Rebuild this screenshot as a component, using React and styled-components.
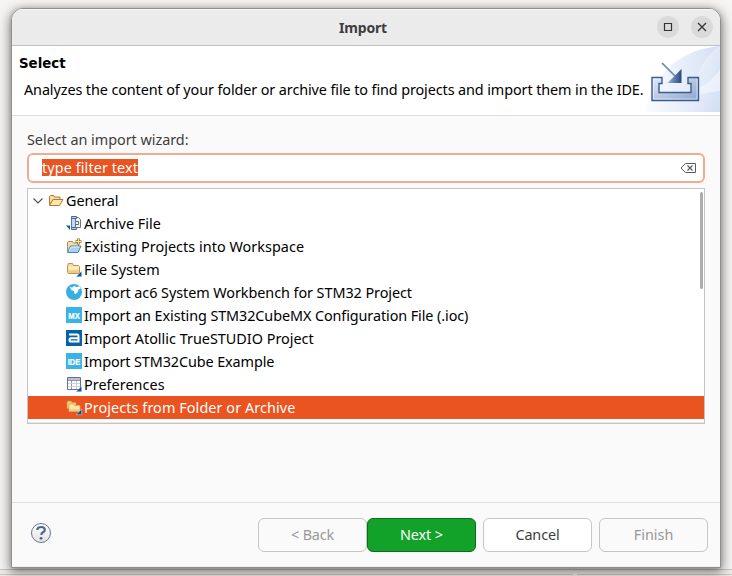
import React from "react";
import styled, { createGlobalStyle, css } from "styled-components";

const Global = createGlobalStyle`
  * { box-sizing: border-box; }
  body {
    margin: 0;
    font-family: "Noto Sans", "Open Sans", sans-serif;
    font-size: 14.4px;
    color: #000;
  }
`;

const Desktop = styled.div`
  width: 732px;
  height: 576px;
  padding: 8px 11px;
  overflow: hidden;
  background:
    linear-gradient(#c9c6c3, #c9c6c3) 0 569px / 732px 1px no-repeat,
    linear-gradient(#c9c6c3, #c9c6c3) 0 574px / 573px 1px no-repeat,
    linear-gradient(#c9c6c3, #c9c6c3) 577px 574px / 155px 1px no-repeat,
    linear-gradient(#eeebe9, #eeebe9) 0 570px / 732px 6px no-repeat,
    #f6f5f3;
`;

const Window = styled.main`
  width: 710px;
  height: 560px;
  display: flex;
  flex-direction: column;
  border: 1px solid #8f8f8e;
  border-radius: 12px 12px 0 0;
  overflow: hidden;
  background: #fafafa;
  box-shadow: 0 3px 12px 1px rgba(0, 0, 0, 0.5), 0 0 4px rgba(0, 0, 0, 0.1);
`;

const TitleBar = styled.header`
  height: 37px;
  flex: none;
  display: grid;
  grid-template-columns: 1fr auto 1fr;
  align-items: center;
  background: #ebebeb;
  border-bottom: 1px solid #bfbfbf;
  box-shadow: inset 0 1px #f9f9f9;
`;

const Title = styled.h1`
  grid-column: 2;
  margin: 0;
  padding: 2px 6px 0 0;
  font-size: 14px;
  line-height: 20px;
  font-weight: 700;
  color: #3d3d3d;
`;

const WindowControls = styled.div`
  display: flex;
  justify-content: flex-end;
  gap: 12px;
  padding-right: 7px;
`;

const ControlButton = styled.button`
  width: 22px;
  height: 22px;
  padding: 0;
  border: 0;
  border-radius: 50%;
  background: #dadada;
  svg { display: block; }
`;

const Banner = styled.section`
  height: 70px;
  flex: none;
  display: flex;
  justify-content: space-between;
  background: #fff;
  border-bottom: 1px solid #dedede;
  > svg { flex: none; }
`;

const BannerText = styled.div`
  padding: 8px 0 0 7px;
  min-width: 0;
  white-space: nowrap;
`;

const BannerTitle = styled.h2`
  margin: 0;
  font-family: "DejaVu Sans", sans-serif;
  font-size: 13.33px;
  line-height: 20px;
  font-weight: 700;
`;

const Text = styled.span`
  white-space: pre;
  letter-spacing: ${(p) => p.$track || 0}px;
`;

const BannerMessage = styled.p`
  margin: 6px 0 0 5px;
  line-height: 20px;
`;

const Body = styled.section`
  flex: 1;
  display: flex;
  flex-direction: column;
  padding: 14px 15px 0;
`;

const FieldLabel = styled.label`
  height: 20px;
  margin-bottom: 3px;
  line-height: 20px;
  color: #3d3d3d;
`;

const SearchBox = styled.div`
  height: 30px;
  flex: none;
  display: flex;
  align-items: center;
  justify-content: space-between;
  padding: 0 6px 0 13px;
  border: 2px solid #f4aa90;
  border-radius: 6px;
  background: #fff;
`;

const Selection = styled.span`
  width: 96px;
  height: 17px;
  margin-bottom: 1px;
  line-height: 17px;
  white-space: nowrap;
  background: #e95420;
  color: #fff;
`;

const Tree = styled.div`
  position: relative;
  height: 236px;
  margin-top: 5px;
  border: 1px solid #c4c4c4;
  background: #fff;
  box-shadow: inset 0 -1px #e8e8e8;
`;

const Row = styled.div`
  height: 23px;
  display: flex;
  align-items: center;
  line-height: 22px;
  padding-left: ${(p) => (p.$child ? 38 : 4)}px;
  ${(p) => p.$selected && css`background: #e95420; color: #fff;`}
  > svg { flex: none; margin: 0 2px 1px 0; overflow: visible; }
`;

const ScrollThumb = styled.div`
  position: absolute;
  top: 3px;
  right: 1px;
  width: 3px;
  height: 97px;
  border-radius: 2px;
  background: #acacac;
`;

const Footer = styled.footer`
  height: 65px;
  flex: none;
  display: flex;
  align-items: flex-start;
  padding: 15px 12px 0 18px;
  border-top: 1px solid #dedede;
  box-shadow: inset 0 -1px #f0f0f0;
`;

const HelpButton = styled.button`
  margin: 3px auto 0 0;
  padding: 0;
  border: 0;
  background: none;
  svg { display: block; }
`;

const Button = styled.button`
  width: 109px;
  height: 34px;
  padding: 0;
  margin-left: ${(p) => (p.$joined ? 0 : 7)}px;
  font: inherit;
  line-height: 20px;
  border-radius: 6px;
  border: 1px solid ${(p) => (p.$primary ? "#0c6d1b" : "#c6c6c6")};
  background: ${(p) => (p.$primary ? "#12a229" : p.disabled ? "#fafafa" : "#fff")};
  color: ${(p) => (p.$primary ? "#fff" : p.disabled ? "#989898" : "#3d3d3d")};
`;

const Glyph = ({ children, size = 16 }) => (
  <svg width={size} height={size} viewBox={`0 0 ${size} ${size}`} aria-hidden="true">{children}</svg>
);

const Corner = () => <path d="M15.7 10V15.7H10z" fill="#07549b" stroke="#fff" strokeWidth=".4" />;

const FolderOpen = () => (
  <Glyph>
    <path d="M1.5 12.5V4.5l1-1h3l1 1.5h5.5v2.5H5.5z" fill="#f6dda2" stroke="#b27b32" />
    <path d="M1.5 13.5l3.5-6h10L11.5 13.5z" fill="#fbe7ad" stroke="#b77a30" />
  </Glyph>
);

const ArchiveIcon = () => (
  <Glyph>
    <path d="M9.5 2.5h3l2 2v8h-5z" fill="#fbf0d2" stroke="#587ba5" />
    <path d="M7.5 3v11" stroke="#c9d8ea" strokeWidth="3" />
    <path d="M5.5 3v10M9.5 3v10" stroke="#587ba5" />
    <path d="M5.5 1.5h5v2h-5zM5.5 12.5h5v2h-5z" fill="#b9cde5" stroke="#476c9a" />
    <path d="M10 6.5h2.5v3H10" fill="#fff" stroke="#476c9a" />
    <path d="M0 10.5h4V15z" fill="#086799" />
  </Glyph>
);

const ExistingIcon = () => (
  <Glyph>
    <path d="M1.5 13V4.5l1-1h4L7.5 5h5v4z" fill="#f3dfac" stroke="#b38b4d" />
    <path d="M1.5 14.5L4.5 8H15l-3 6.5z" fill="#a9d0f2" stroke="#477fb7" />
    <path d="M3.3 12.5l2-3.5h8" fill="none" stroke="#dff1fe" />
    <path d="M12.5.5v6m-3-3h6" stroke="#94702a" strokeWidth="2.6" />
    <path d="M12.5 1v5m-2.5-2.5h5" stroke="#ffe994" />
  </Glyph>
);

const FolderIcon = () => (
  <Glyph>
    <path d="M1.5 4.5l1-2h4l1 2h5l1 1v7h-11l-1-1z" fill="#f6dc9f" stroke="#c19150" />
    <path d="M3 5.5h9.5v3H2.5z" fill="#ffedbd" />
    <path d="M2.5 9.5h10v2.5h-10z" fill="#edca80" />
    <Corner />
  </Glyph>
);

const GlobeIcon = () => (
  <Glyph>
    <circle cx="8" cy="8" r="8" fill="#38aee2" />
    <path d="M3.6 2.5L6 3.8l2.5-2 1.8 1.5 3.5-1 .9 2.3-2.2 1-.5 2.2-2.4 2.4-1.2-.6-.5-2.5-2.4-.8z" fill="#fff" />
  </Glyph>
);

const TileText = styled.text`
  font-family: "Liberation Sans", sans-serif;
  font-weight: 700;
  font-size: ${(p) => p.$size}px;
  text-anchor: middle;
  fill: #fff;
  stroke: #fff;
  stroke-width: 0.2px;
`;

const Tile = ({ label, color, size, y, w }) => (
  <Glyph>
    <path d="M0 0h16v16H0z" fill={color} />
    <TileText x="8" y={y} $size={size} textLength={w} lengthAdjust="spacingAndGlyphs">{label}</TileText>
  </Glyph>
);

const AtollicIcon = () => (
  <Glyph>
    <path d="M0 0h16v16H0z" fill="#0862ab" />
    <path d="M3 4.5h8q1.5 0 1.5 1.6v5.4H5q-1.5 0-1.5-1.6T5 8.3h7" fill="none" stroke="#fff" strokeWidth="2" />
  </Glyph>
);

const PreferencesIcon = () => (
  <Glyph>
    <path d="M1.5 1.5h13v12h-13z" fill="#fff" stroke="#66708c" />
    <path d="M2 2h12v2H2z" fill="#b7c1d7" />
    <path d="M2 4.5h12M5.5 4v9" stroke="#8d96ac" />
    <path d="M2 7.5h12M2 10.5h12M10.5 5v8" stroke="#ccd2dc" />
    <Corner />
  </Glyph>
);

const ProjectsIcon = () => (
  <Glyph>
    <path d="M1 9.5V3l1-1h3l1 1.5h4V9.5z" fill="#f0c97c" stroke="#c99546" strokeWidth=".6" />
    <path d="M3 12.5V6l1-1h3.5l1 1.5H14v6z" fill="#ffe6a7" stroke="#daa75a" strokeWidth=".8" />
    <path d="M3.5 10h10v2h-10z" fill="#f1cc83" />
    <Corner />
  </Glyph>
);

const Chevron = () => (
  <svg width="14" height="16" viewBox="0 0 14 16"><path d="M1.5 6.5L6 11l4.5-4.5" fill="none" stroke="#555" strokeWidth="1.2" /></svg>
);

const ClearIcon = () => (
  <svg width="17" height="12" viewBox="0 0 17 12">
    <path d="M5.5 1.5h10v9h-10L1 6z" fill="none" stroke="#5b5b5b" />
    <path d="M7.5 3.5l5 5m0-5l-5 5" stroke="#5b5b5b" strokeWidth="1.2" />
  </svg>
);

const HelpIcon = () => (
  <svg width="22" height="22" viewBox="0 0 22 22">
    <defs>
      <linearGradient id="help" x2="0" y2="1"><stop stopColor="#fff" /><stop offset="1" stopColor="#e2e2e2" /></linearGradient>
    </defs>
    <circle cx="11" cy="12" r="9.5" fill="url(#help)" stroke="#667892" />
    <path d="M7.3 9q.1-3 3.9-3 3.6 0 3.6 2.7 0 1.6-1.8 2.6-1.7.9-1.7 2.7" fill="none" stroke="#50668a" strokeWidth="2.2" />
    <circle cx="11.1" cy="17.3" r="1.4" fill="#50668a" />
  </svg>
);

const ImportArt = () => (
  <svg width="76" height="66" viewBox="0 0 76 66">
    <defs>
      <linearGradient id="sweep"><stop stopColor="#fbfcff" /><stop offset="1" stopColor="#d5e0f5" /></linearGradient>
      <linearGradient id="sweep2" x2="1" y2="1"><stop stopColor="#fff" /><stop offset="1" stopColor="#cfdcf4" /></linearGradient>
      <linearGradient id="tray" x2="1" y2="1"><stop stopColor="#e4ebf5" /><stop offset=".55" stopColor="#b4c4df" /><stop offset="1" stopColor="#8ba5cd" /></linearGradient>
      <linearGradient id="arrow"><stop stopColor="#9ab2d4" /><stop offset="1" stopColor="#26497f" /></linearGradient>
    </defs>
    <path d="M1 66C6 34 33 3 76 0v66z" fill="url(#sweep)" />
    <path d="M46 66C47 37 57 12 76 0v66z" fill="url(#sweep2)" opacity=".6" />
    <path d="M27 51C50 48 64 39 76 24v21C65 46 48 51 27 51z" fill="#fff" opacity=".45" />
    <path d="M8 31.5h10v6h-3v9h32v-9h-3v-6h10.5v23H8z" fill="url(#tray)" stroke="#385c98" strokeWidth="1.4" />
    <path d="M9.5 33h7M9.5 32.5V53h43.5V33" fill="none" stroke="#f0f4fa" opacity=".65" />
    <path d="M18 17l15 15" stroke="#6887b5" strokeWidth="1.7" />
    <path d="M37.5 23v14h-14z" fill="url(#arrow)" />
  </svg>
);

const wizards = [
  { Icon: ArchiveIcon, label: "Archive File", track: 0.04 },
  { Icon: ExistingIcon, label: "Existing Projects into Workspace", track: 0.04 },
  { Icon: FolderIcon, label: "File System", track: 0 },
  { Icon: GlobeIcon, label: "Import ac6 System Workbench for STM32 Project", track: -0.06 },
  { Icon: () => <Tile label="MX" color="#3cb3e6" size={9.5} y={11.5} w={11.5} />, label: "Import an Existing STM32CubeMX Configuration File (.ioc)", track: -0.09 },
  { Icon: AtollicIcon, label: "Import Atollic TrueSTUDIO Project", track: 0 },
  { Icon: () => <Tile label="IDE" color="#3cb3e6" size={9.5} y={11.5} w={12.5} />, label: "Import STM32Cube Example", track: -0.1 },
  { Icon: PreferencesIcon, label: "Preferences", track: 0.04 },
  { Icon: ProjectsIcon, label: "Projects from Folder or Archive", track: 0.08, selected: true },
];

export default function App() {
  return (
    <Desktop>
      <Global />
      <Window>
        <TitleBar>
          <Title><Text $track={-0.2}>Import</Text></Title>
          <WindowControls>
            <ControlButton aria-label="Maximize"><Glyph size={22}><path d="M7.5 7.5h7v7h-7z" fill="none" stroke="#333" strokeWidth="1.2" /></Glyph></ControlButton>
            <ControlButton aria-label="Close"><Glyph size={22}><path d="M7 7l8 8m0-8l-8 8" stroke="#333" strokeWidth="1.3" /></Glyph></ControlButton>
          </WindowControls>
        </TitleBar>
        <Banner>
          <BannerText>
            <BannerTitle><Text>Select</Text></BannerTitle>
            <BannerMessage><Text $track={-0.1}>Analyzes the content of your folder or archive file to find projects and import them in the IDE.</Text></BannerMessage>
          </BannerText>
          <ImportArt />
        </Banner>
        <Body>
          <FieldLabel><Text $track={-0.03}>Select an import wizard:</Text></FieldLabel>
          <SearchBox>
            <Selection><Text $track={0.1}>type filter text</Text></Selection>
            <ClearIcon />
          </SearchBox>
          <Tree>
            <Row><Chevron /><FolderOpen /><Text $track={-0.1}>General</Text></Row>
            {wizards.map(({ Icon, label, track, selected }) => (
              <Row key={label} $child $selected={selected}><Icon /><Text $track={track}>{label}</Text></Row>
            ))}
            <ScrollThumb />
          </Tree>
        </Body>
        <Footer>
          <HelpButton aria-label="Help"><HelpIcon /></HelpButton>
          <Button disabled><Text $track={-0.2}>{"< Back"}</Text></Button>
          <Button $primary $joined><Text $track={-0.1}>{"Next >"}</Text></Button>
          <Button><Text $track={-0.1}>Cancel</Text></Button>
          <Button disabled><Text>Finish</Text></Button>
        </Footer>
      </Window>
    </Desktop>
  );
}
